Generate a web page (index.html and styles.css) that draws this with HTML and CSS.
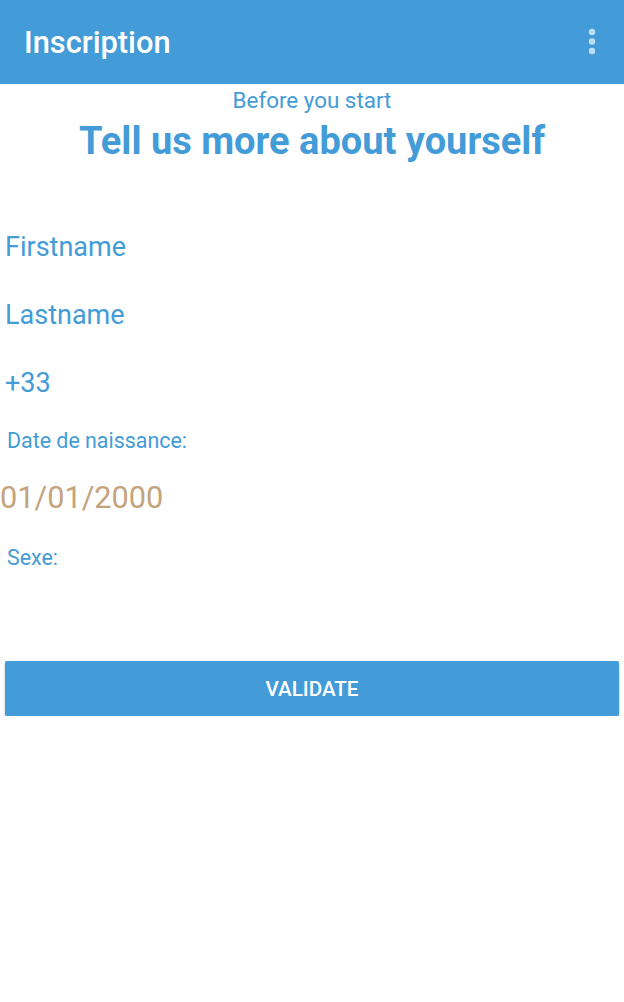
FILE: index.html
```html
<!DOCTYPE html>
<html>
<head>
<meta charset="utf-8">
<link rel="stylesheet" href="styles.css">
</head>
<body>
<header class="appbar">
  <h1 class="title">Inscription</h1>
  <svg class="menu" width="12" height="30" viewBox="0 0 12 30">
    <circle cx="6" cy="4" r="3.2" fill="#b9def5"/>
    <circle cx="6" cy="13.5" r="3.2" fill="#b9def5"/>
    <circle cx="6" cy="23" r="3.2" fill="#b9def5"/>
  </svg>
</header>
<main class="content">
  <p class="subtitle">Before you start</p>
  <h2 class="heading">Tell us more about yourself</h2>
  <div class="fields">
    <div class="field">Firstname</div>
    <div class="field">Lastname</div>
    <div class="field">+33</div>
    <div class="label">Date de naissance:</div>
    <div class="date">01/01/2000</div>
    <div class="label sexe">Sexe:</div>
  </div>
  <button class="validate">VALIDATE</button>
</main>
</body>
</html>
```
FILE: styles.css
```css
html, body {
  margin: 0;
  padding: 0;
  background: #ffffff;
  font-family: Roboto, "Liberation Sans", sans-serif;
}
.appbar {
  height: 84px;
  background: #439cd7;
  display: flex;
  align-items: center;
  justify-content: space-between;
  padding: 0 26px 0 24px;
  box-sizing: border-box;
}
.title {
  margin: 0;
  color: #ffffff;
  font-size: 30.8px;
  font-weight: 500;
  line-height: 1;
  padding-top: 2px;
}
.menu {
  display: block;
  margin-top: 2px;
}
.content {
  display: flex;
  flex-direction: column;
}
.subtitle {
  margin: 0;
  padding-top: 4px;
  text-align: center;
  color: #439cd7;
  font-size: 22.4px;
  line-height: 24px;
}
.heading {
  margin: 0;
  padding-top: 9px;
  text-align: center;
  color: #439cd7;
  font-size: 38px;
  font-weight: 700;
  line-height: 40px;
}
.fields {
  display: flex;
  flex-direction: column;
  padding-top: 52px;
}
.field {
  color: #439cd7;
  font-size: 27px;
  line-height: 68px;
  padding-left: 5px;
  height: 68px;
}
.label {
  color: #439cd7;
  font-size: 21.4px;
  line-height: 24px;
  padding-left: 7px;
  margin-top: 12px;
}
.date {
  color: #c4a47e;
  font-size: 30.7px;
  line-height: 34px;
  padding-top: 28px;
  padding-left: 0;
}
.sexe {
  margin-top: 31px;
}
.validate {
  margin: 91px 5px 0 5px;
  height: 55px;
  border: none;
  border-radius: 2px;
  background: #439cd7;
  color: #ffffff;
  font-family: Roboto, "Liberation Sans", sans-serif;
  font-size: 20.6px;
  font-weight: 500;
  box-shadow: 0 2px 3px rgba(0, 0, 0, 0.25);
}
```
